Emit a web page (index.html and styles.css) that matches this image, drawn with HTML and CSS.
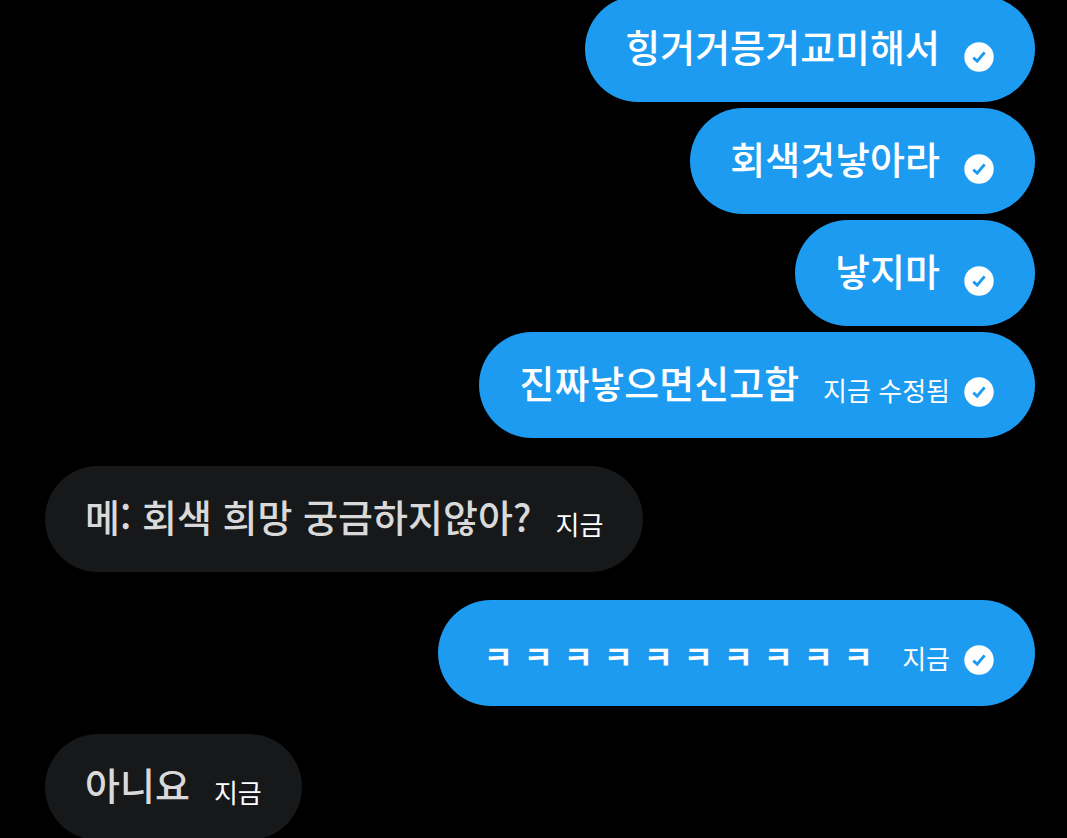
FILE: index.html
```
<!DOCTYPE html>
<html lang="ko">
<head>
<meta charset="utf-8">
<title>채팅</title>
<link rel="stylesheet" href="styles.css">
</head>
<body>
<svg class="symbols" aria-hidden="true">
  <symbol id="check" viewBox="0 0 30 30">
    <circle cx="15" cy="15" r="14.7" fill="#fff"/>
    <path d="M9.3 15.6 13.2 19.2 20.6 10.4" fill="none" stroke="#1d9bf0" stroke-width="2.9"/>
  </symbol>
</svg>
<main class="chat">
  <div class="group sent">
    <div class="bubble"><p class="text">힝거거믕거교미해서</p><svg class="check"><use href="#check"/></svg></div>
    <div class="bubble"><p class="text">회색것낳아라</p><svg class="check"><use href="#check"/></svg></div>
    <div class="bubble"><p class="text">낳지마</p><svg class="check"><use href="#check"/></svg></div>
    <div class="bubble"><p class="text">진짜낳으면신고함</p><span class="meta">지금 수정됨</span><svg class="check"><use href="#check"/></svg></div>
  </div>
  <div class="group received">
    <div class="bubble"><p class="text">메: 회색 희망 궁금하지않아?</p><span class="meta">지금</span></div>
  </div>
  <div class="group sent">
    <div class="bubble"><p class="text laugh"><span>ㅋ</span><span>ㅋ</span><span>ㅋ</span><span>ㅋ</span><span>ㅋ</span><span>ㅋ</span><span>ㅋ</span><span>ㅋ</span><span>ㅋ</span><span>ㅋ</span></p><span class="meta">지금</span><svg class="check"><use href="#check"/></svg></div>
  </div>
  <div class="group received">
    <div class="bubble"><p class="text">아니요</p><span class="meta">지금</span></div>
  </div>
</main>
</body>
</html>
```
FILE: styles.css
```
* { box-sizing: border-box; }

html {
  overflow: hidden;
  background: #000;
}

body {
  margin: 0;
  font-family: "Noto Sans CJK KR", sans-serif;
  color: #fff;
}

.symbols { display: none; }

/* The list is scrolled a little, so the first bubble starts above the window. */
.chat {
  display: flex;
  flex-direction: column;
  gap: 28px;
  margin-top: -4px;
  padding: 0 32px 0 45px;
}

.group {
  display: flex;
  flex-direction: column;
  gap: 6px;
}

.sent { align-items: flex-end; }
.received { align-items: flex-start; }

.bubble {
  display: flex;
  align-items: flex-start;
  max-width: 100%;
  padding: 21px 40px 27px;
  border-radius: 53px;
  background: #1d9bf0;
}

.sent .bubble { padding-right: 41px; }
.received .bubble { background: #16181a; }

.text {
  margin: 0;
  font-size: 38px;
  font-weight: 500;
  line-height: 58px;
}

.received .text { color: #d9d9d9; }

.laugh {
  padding-top: 10px;
  font-size: 32px;
  font-weight: 700;
  line-height: 48px;
}

.laugh span {
  display: inline-block;
  width: 40px;
  text-align: center;
}

.meta {
  margin: 17px 0 0 24px;
  font-size: 26px;
  line-height: 40px;
}

.check {
  flex: none;
  width: 30px;
  height: 30px;
  margin: 25px 0 0 24px;
}

.meta + .check {
  margin-left: 14px;
  margin-top: 24px;
}
```
